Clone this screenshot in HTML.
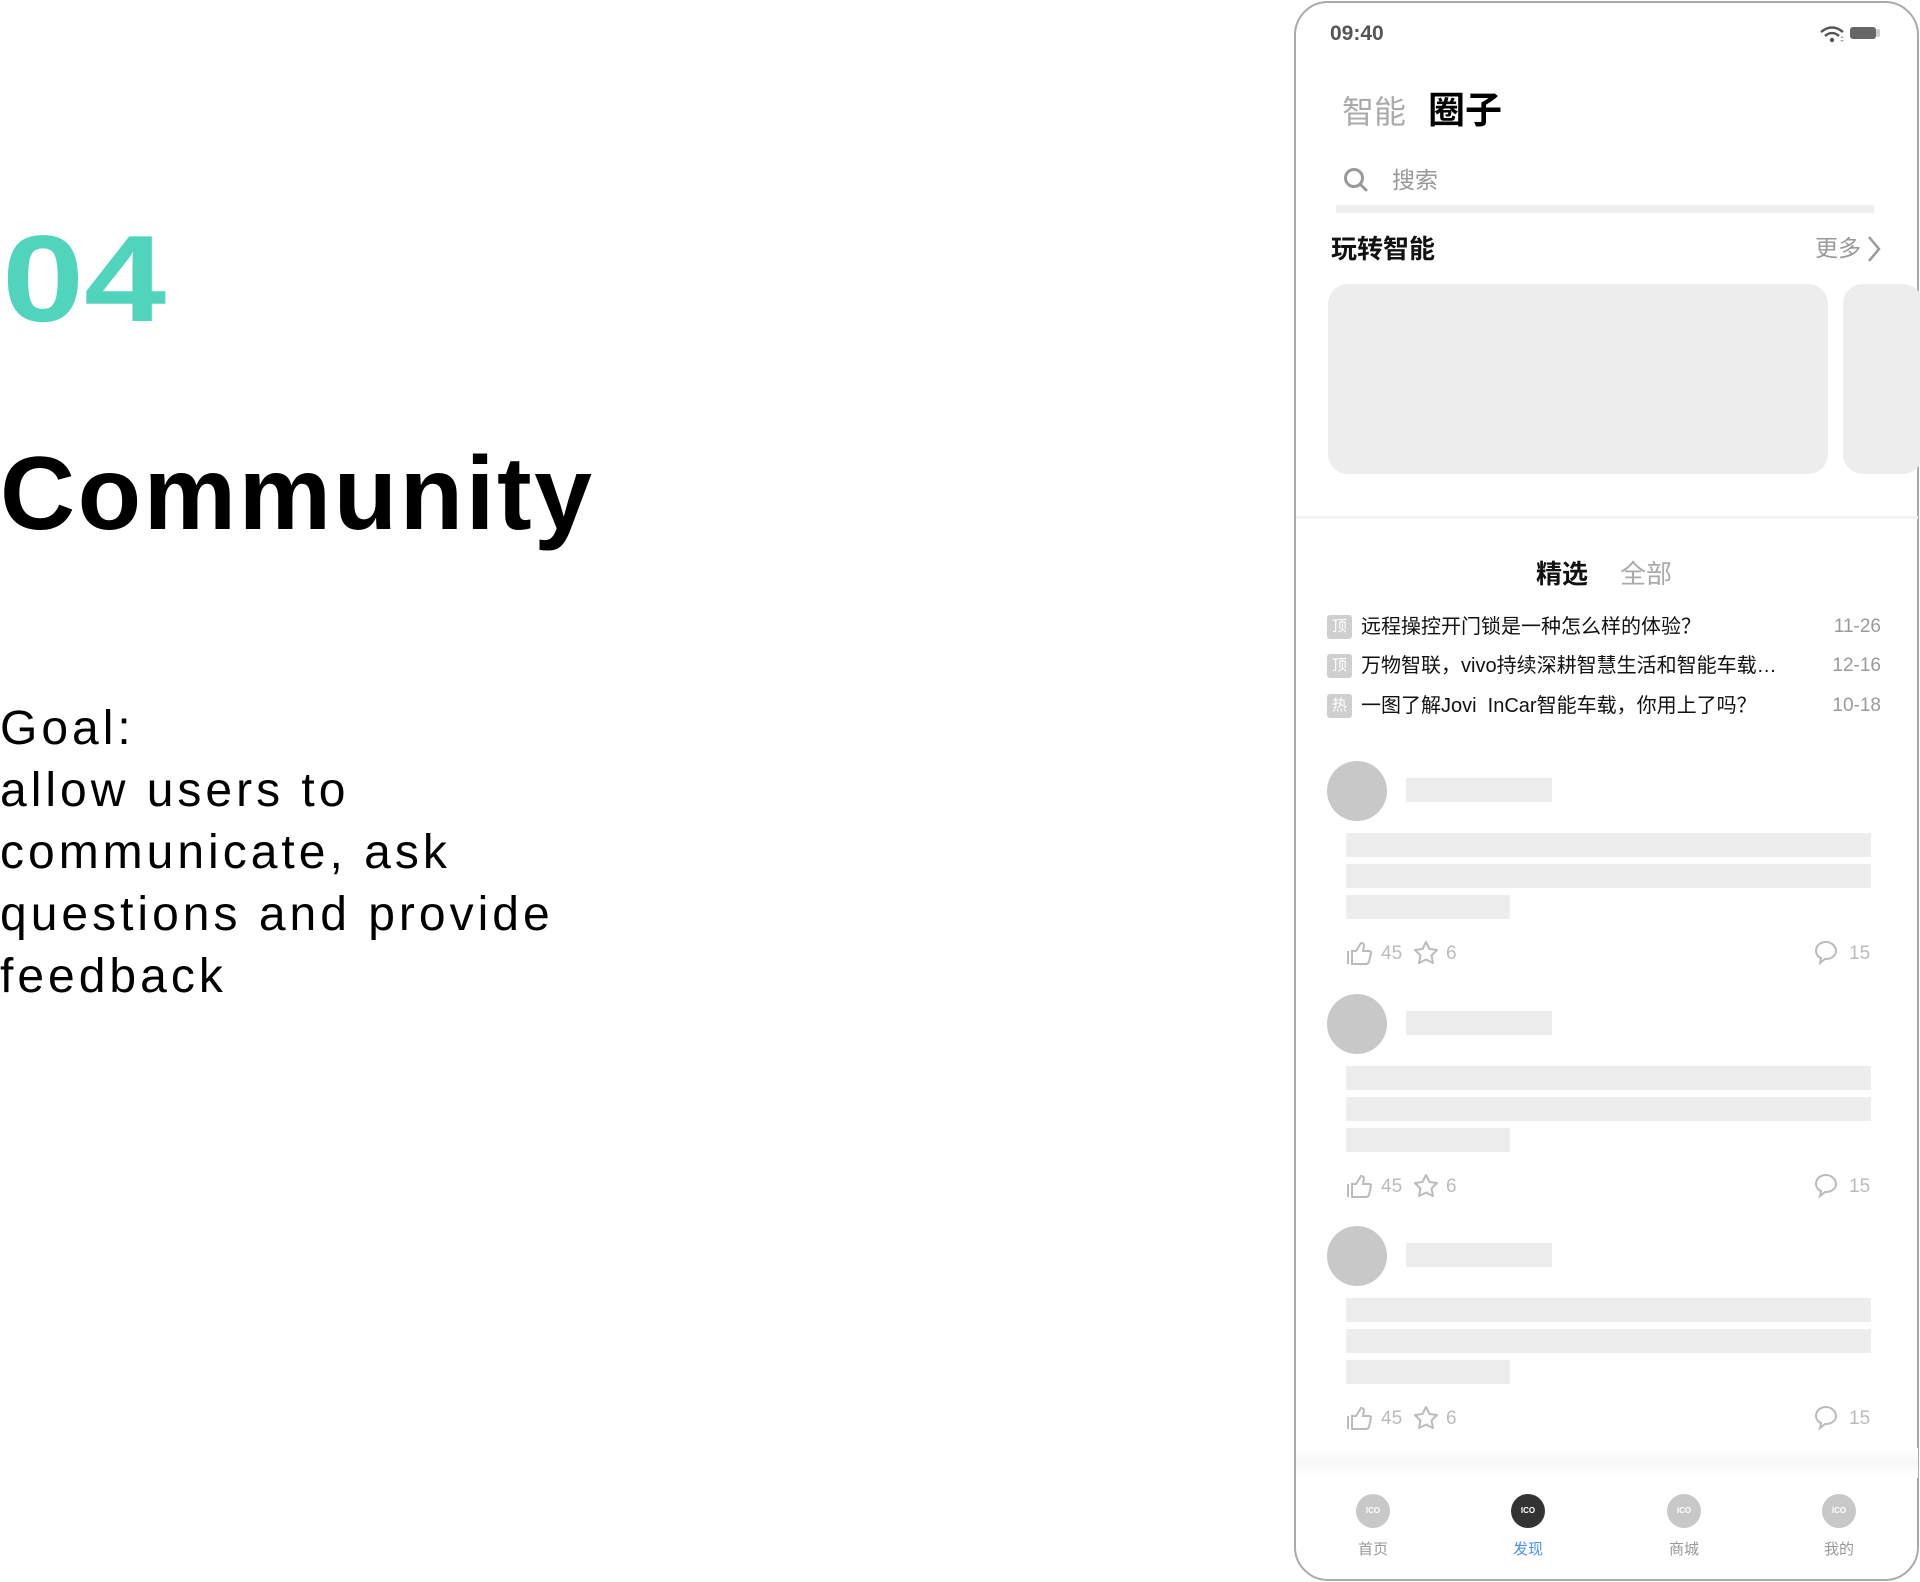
<!DOCTYPE html>
<html><head><meta charset="utf-8">
<style>
*{margin:0;padding:0;box-sizing:border-box}
body{width:1920px;height:1582px;background:#fff;position:relative;overflow:hidden;font-family:"Liberation Sans","Noto Sans CJK SC",sans-serif}
.a{position:absolute;white-space:nowrap}
.bar{position:absolute;background:#ededed}
.av{position:absolute;width:60px;height:60px;border-radius:50%;background:#c8c8c8}
.num{position:absolute;font-size:19px;color:#bbb;line-height:20px}
.tag{position:absolute;left:1327px;width:25px;height:24px;background:#cfcfcf;border-radius:3px;color:#fff;font-size:15px;line-height:24px;text-align:center}
.row{position:absolute;left:1361px;font-size:20px;color:#111;line-height:24px}
.dt{position:absolute;right:39px;font-size:19px;color:#9a9a9a;line-height:24px}
.tab{position:absolute;width:34px;height:34px;border-radius:50%;background:#c8c8c8;color:#fff;font-size:8px;font-weight:bold;line-height:34px;text-align:center;top:1494px}
.tl{position:absolute;top:1538px;font-size:15px;color:#999;width:60px;text-align:center}
</style></head><body>

<div class="a" style="left:2px;top:209px;font-size:123px;font-weight:bold;color:#50d4bc;line-height:141px;transform:scaleX(1.2);transform-origin:left top">04</div>
<div class="a" style="left:0;top:442px;font-size:104px;font-weight:bold;color:#000;line-height:104px;letter-spacing:2.5px;">Community</div>
<div class="a" style="left:0;top:698px;font-size:48px;line-height:62px;color:#000;letter-spacing:4px;">Goal:<br>allow users to<br>communicate, ask<br>questions and provide<br>feedback</div>

<div style="position:absolute;left:1294px;top:1px;width:625px;height:1580px;border:2px solid #aaa;border-radius:34px;background:#fff;overflow:hidden"></div>
<div class="a" style="left:1330px;top:22px;font-size:21px;color:#555;font-weight:bold;">09:40</div>
<svg class="a" style="left:1820px;top:24px" width="64" height="20" viewBox="0 0 64 20">
<path d="M1 8 Q12 -1 23 8" stroke="#555" stroke-width="2.5" fill="none"/>
<path d="M5 12 Q12 6 19 12" stroke="#555" stroke-width="2.5" fill="none"/>
<circle cx="12" cy="16" r="2.2" fill="#555"/>
<path d="M20 14l2-2 2 2z M20 16l2 2 2-2z" fill="#aaa"/>
<rect x="30" y="3" width="26" height="12" rx="3" fill="#666"/>
<rect x="56" y="5" width="4" height="8" rx="2" fill="#ccc"/>
</svg>

<div class="a" style="left:1342px;top:92px;font-size:32px;color:#aaa;line-height:40px">智能</div>
<div class="a" style="left:1428px;top:89px;font-size:37px;color:#000;font-weight:bold;line-height:44px">圈子</div>

<svg class="a" style="left:1343px;top:167px" width="26" height="26" viewBox="0 0 26 26"><circle cx="11" cy="11" r="8.5" stroke="#999" stroke-width="3" fill="none"/><path d="M17 17l6 6" stroke="#999" stroke-width="3" stroke-linecap="round"/></svg>
<div class="a" style="left:1392px;top:165px;font-size:23px;color:#999;line-height:30px">搜索</div>
<div class="bar" style="left:1336px;top:205px;width:538px;height:8px;background:#efefef"></div>

<div class="a" style="left:1331px;top:233px;font-size:26px;color:#111;font-weight:bold;line-height:32px">玩转智能</div>
<div class="a" style="left:1815px;top:233px;font-size:23px;color:#999;line-height:30px">更多</div>
<svg class="a" style="left:1866px;top:234px" width="16" height="30" viewBox="0 0 16 30"><path d="M3 3l10 12-10 12" stroke="#999" stroke-width="2.5" fill="none"/></svg>

<div class="bar" style="left:1328px;top:284px;width:500px;height:190px;border-radius:20px"></div>
<div class="bar" style="left:1843px;top:284px;width:80px;height:190px;border-radius:20px"></div>
<div class="bar" style="left:1296px;top:516px;width:622px;height:3px;background:#f3f3f3"></div>

<div class="a" style="left:1536px;top:558px;font-size:26px;color:#111;font-weight:bold;line-height:32px">精选</div>
<div class="a" style="left:1620px;top:558px;font-size:26px;color:#aaa;line-height:32px">全部</div>

<div class="tag" style="top:615px">顶</div><div class="row" style="top:615px">远程操控开门锁是一种怎么样的体验？</div><div class="dt" style="top:615px">11-26</div>
<div class="tag" style="top:654px">顶</div><div class="row" style="top:654px">万物智联，vivo持续深耕智慧生活和智能车载…</div><div class="dt" style="top:654px">12-16</div>
<div class="tag" style="top:694px">热</div><div class="row" style="top:694px">一图了解Jovi&nbsp; InCar智能车载，你用上了吗？</div><div class="dt" style="top:694px">10-18</div>

<div style="position:absolute;left:1296px;top:1448px;width:622px;height:30px;background:linear-gradient(#fff,#f8f8f8 50%,#fff)"></div>

<div class="tab" style="left:1356px">ICO</div>
<div class="tab" style="left:1511px;background:#333">ICO</div>
<div class="tab" style="left:1667px">ICO</div>
<div class="tab" style="left:1822px">ICO</div>
<div class="tl" style="left:1343px">首页</div>
<div class="tl" style="left:1498px;color:#4a90f0">发现</div>
<div class="tl" style="left:1654px">商城</div>
<div class="tl" style="left:1809px">我的</div>

<!-- post 1 -->
<div class="av" style="left:1327px;top:761px"></div>
<div class="bar" style="left:1406px;top:778px;width:146px;height:24px"></div>
<div class="bar" style="left:1346px;top:833px;width:525px;height:24px"></div>
<div class="bar" style="left:1346px;top:864px;width:525px;height:24px"></div>
<div class="bar" style="left:1346px;top:895px;width:164px;height:24px"></div>
<svg class="a" style="left:1346px;top:940px" width="100" height="26" viewBox="0 0 100 26"><path d="M2 11v13M6 11h4l5-8q3 0 3 3l-1 5h6q2 0 2 2l-2 9q-1 2-3 2H6z" stroke="#bbb" stroke-width="2" fill="none"/><path d="M80 2l3.5 7 7.5 1-5.5 5.5 1.5 7.5-7-3.5-7 3.5 1.5-7.5L69 10l7.5-1z" stroke="#bbb" stroke-width="2" fill="none" stroke-linejoin="round"/></svg>
<div class="num" style="left:1381px;top:944px">45</div><div class="num" style="left:1446px;top:944px">6</div>
<svg class="a" style="left:1814px;top:940px" width="24" height="26" viewBox="0 0 24 26"><path d="M12 2C6 2 2 6 2 11c0 3 2 6 5 7l-1 5 5-4h1c6 0 10-4 10-8S18 2 12 2z" stroke="#bbb" stroke-width="2" fill="none"/></svg>
<div class="num" style="left:1849px;top:944px">15</div>

<!-- post 2 -->
<div class="av" style="left:1327px;top:994px"></div>
<div class="bar" style="left:1406px;top:1011px;width:146px;height:24px"></div>
<div class="bar" style="left:1346px;top:1066px;width:525px;height:24px"></div>
<div class="bar" style="left:1346px;top:1097px;width:525px;height:24px"></div>
<div class="bar" style="left:1346px;top:1128px;width:164px;height:24px"></div>
<svg class="a" style="left:1346px;top:1173px" width="100" height="26" viewBox="0 0 100 26"><path d="M2 11v13M6 11h4l5-8q3 0 3 3l-1 5h6q2 0 2 2l-2 9q-1 2-3 2H6z" stroke="#bbb" stroke-width="2" fill="none"/><path d="M80 2l3.5 7 7.5 1-5.5 5.5 1.5 7.5-7-3.5-7 3.5 1.5-7.5L69 10l7.5-1z" stroke="#bbb" stroke-width="2" fill="none" stroke-linejoin="round"/></svg>
<div class="num" style="left:1381px;top:1177px">45</div><div class="num" style="left:1446px;top:1177px">6</div>
<svg class="a" style="left:1814px;top:1173px" width="24" height="26" viewBox="0 0 24 26"><path d="M12 2C6 2 2 6 2 11c0 3 2 6 5 7l-1 5 5-4h1c6 0 10-4 10-8S18 2 12 2z" stroke="#bbb" stroke-width="2" fill="none"/></svg>
<div class="num" style="left:1849px;top:1177px">15</div>

<!-- post 3 -->
<div class="av" style="left:1327px;top:1226px"></div>
<div class="bar" style="left:1406px;top:1243px;width:146px;height:24px"></div>
<div class="bar" style="left:1346px;top:1298px;width:525px;height:24px"></div>
<div class="bar" style="left:1346px;top:1329px;width:525px;height:24px"></div>
<div class="bar" style="left:1346px;top:1360px;width:164px;height:24px"></div>
<svg class="a" style="left:1346px;top:1405px" width="100" height="26" viewBox="0 0 100 26"><path d="M2 11v13M6 11h4l5-8q3 0 3 3l-1 5h6q2 0 2 2l-2 9q-1 2-3 2H6z" stroke="#bbb" stroke-width="2" fill="none"/><path d="M80 2l3.5 7 7.5 1-5.5 5.5 1.5 7.5-7-3.5-7 3.5 1.5-7.5L69 10l7.5-1z" stroke="#bbb" stroke-width="2" fill="none" stroke-linejoin="round"/></svg>
<div class="num" style="left:1381px;top:1409px">45</div><div class="num" style="left:1446px;top:1409px">6</div>
<svg class="a" style="left:1814px;top:1405px" width="24" height="26" viewBox="0 0 24 26"><path d="M12 2C6 2 2 6 2 11c0 3 2 6 5 7l-1 5 5-4h1c6 0 10-4 10-8S18 2 12 2z" stroke="#bbb" stroke-width="2" fill="none"/></svg>
<div class="num" style="left:1849px;top:1409px">15</div>

</body></html>
